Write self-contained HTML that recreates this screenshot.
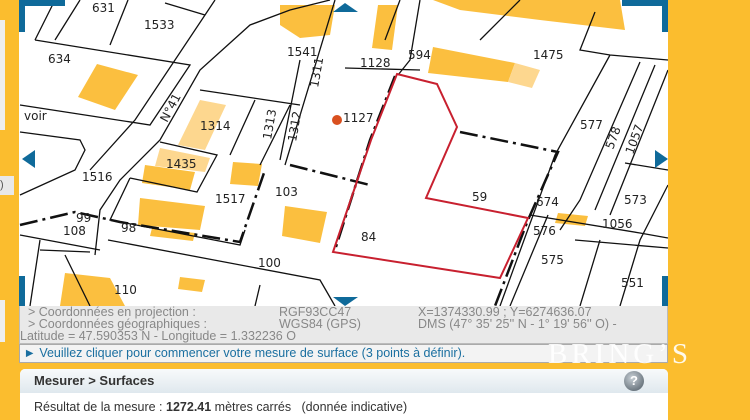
<!DOCTYPE html>
<html><head><meta charset="utf-8"><style>
body{margin:0;width:750px;height:420px;overflow:hidden;background:#fbbd2e;font-family:"Liberation Sans",sans-serif;position:relative}
.abs{position:absolute}
#map{left:19px;top:0;width:649px;height:306px;background:#fff}
#coords{left:19px;top:306px;width:647px;height:37px;background:#e9e9e9;border:1px solid #bbb;border-top:none;font-size:12.5px;color:#888;line-height:12.5px}
#msg{left:19px;top:344px;width:647px;height:17px;background:#f3f3f3;border:1px solid #aaa;font-size:12.5px;color:#1a6fa0;line-height:17px}
#meas{left:20px;top:369px;width:648px;height:51px;background:#fff;border-radius:5px 5px 0 0}
#mh{height:24px;border-radius:5px 5px 0 0;background:linear-gradient(#f8fafb,#dfe8ee);font-weight:bold;font-size:13px;color:#333;line-height:24px;padding-left:14px}
</style></head><body>
<div class="abs" style="left:0;top:20px;width:5px;height:110px;background:#eee"></div>
<div class="abs" style="left:0;top:176px;width:14px;height:19px;background:#e8e8e8;font-size:11px;color:#555;line-height:19px">)</div>
<div class="abs" style="left:0;top:300px;width:5px;height:42px;background:#eee"></div>
<div class="abs" id="map">
<svg width="649" height="306" viewBox="19 0 649 306" xmlns="http://www.w3.org/2000/svg" font-family="DejaVu Sans, sans-serif" font-size="12" fill="#222">
<g fill="#fbbf3f">
<polygon points="97,64 138,75 115,110 78,97"/>
<polygon points="280,5 335,5 330,35 300,38 280,25"/>
<polygon points="378,5 398,5 392,50 372,48"/>
<polygon points="433,0 620,0 625,30 540,20 460,10"/>
<polygon points="433,47 515,63 508,82 428,73"/>
<polygon points="145,165 195,172 190,190 142,183"/>
<polygon points="233,162 262,164 258,186 230,184"/>
<polygon points="140,198 205,206 200,230 138,225"/>
<polygon points="152,228 195,233 193,241 150,236"/>
<polygon points="285,206 327,212 320,243 282,236"/>
<polygon points="65,273 110,278 125,306 60,306"/>
<polygon points="180,277 205,280 202,292 178,289"/>
<polygon points="558,213 588,216 585,226 555,223"/>
</g>
<g fill="#fdd78f">
<polygon points="200,100 226,105 205,150 178,145"/>
<polygon points="160,148 210,158 205,172 155,166"/>
<polygon points="515,63 540,70 532,88 508,82"/>
</g>
<g stroke="#111" stroke-width="1.3" fill="none">
<path d="M55,0 L35,40 M80,0 L55,40 M128,0 L110,45 M165,3 L205,15 M35,40 L190,65 L150,125 L20,105 M215,0 L135,120 L90,170"/>
<path d="M20,132 L80,140 L85,150 L75,170 L20,195"/>
<path d="M330,0 L290,10 L250,25 L200,70 L160,140 L120,180 L100,210 L95,255"/>
<path d="M200,90 L300,105 M255,100 L230,155 M290,105 L260,165 M300,60 L280,160 M335,0 L285,165"/>
<path d="M160,142 L217,155 L197,192 L130,178"/>
<path d="M130,178 L110,220 L240,245 L245,230"/>
<path d="M108,240 L320,280 L335,306 M20,235 L100,250 M40,250 L90,252 M65,255 L90,306 M40,240 L30,306 M260,285 L255,306"/>
<path d="M400,0 L385,40 M420,0 L415,30 L410,60 L398,75 M520,0 L480,40"/>
<path d="M345,68 L420,70 M595,12 L580,50 L610,55 L668,60"/>
<path d="M610,55 L555,155 L500,306 M640,62 L580,200 L560,230 M655,65 L595,210 M668,70 L610,215"/>
<path d="M625,163 L668,170 M668,185 L640,240 L620,306 M530,215 L640,233 L668,238 M575,240 L668,248 M600,240 L580,306"/>
<path d="M548,215 L510,306"/>
</g>
<g stroke="#111" stroke-width="2.5" fill="none" stroke-dasharray="18,5,3,5">
<path d="M395,76 L370,140 L335,250"/>
<path d="M290,165 L370,185"/>
<path d="M460,132 L558,152 L528,220 L495,306"/>
<path d="M20,225 L75,212 L120,222 L240,242 L265,170"/>
</g>
<polygon points="397,74 437,84 457,127 426,198 528,218 500,278 333,252 371,140" fill="none" stroke="#c8202f" stroke-width="2"/>
<circle cx="337" cy="120" r="5" fill="#d9501f"/>
<g>
<text x="92" y="12">631</text><text x="144" y="29">1533</text><text x="48" y="63">634</text><text x="287" y="56">1541</text>
<text x="360" y="67">1128</text><text x="408" y="59">594</text><text x="533" y="59">1475</text><text x="24" y="120">voir</text>
<text x="200" y="130">1314</text><text x="343" y="122">1127</text><text x="580" y="129">577</text><text x="166" y="168">1435</text>
<text x="82" y="181">1516</text><text x="275" y="196">103</text><text x="215" y="203">1517</text><text x="472" y="201">59</text>
<text x="536" y="206">674</text><text x="624" y="204">573</text><text x="602" y="228">1056</text><text x="533" y="235">576</text>
<text x="76" y="222">99</text><text x="63" y="235">108</text><text x="121" y="232">98</text><text x="361" y="241">84</text>
<text x="258" y="267">100</text><text x="541" y="264">575</text><text x="114" y="294">110</text><text x="621" y="287">551</text>
<text transform="translate(167,123) rotate(-62)">N°41</text>
<text transform="translate(318,88) rotate(-80)">1311</text>
<text transform="translate(271,140) rotate(-80)">1313</text>
<text transform="translate(296,142) rotate(-80)">1312</text>
<text transform="translate(613,150) rotate(-70)">578</text>
<text transform="translate(633,155) rotate(-70)">1057</text>
</g>
<g fill="#0f6a9a">
<rect x="19" y="0" width="46" height="6"/><rect x="19" y="0" width="6" height="32"/>
<rect x="622" y="0" width="46" height="6"/><rect x="662" y="0" width="6" height="32"/>
<rect x="19" y="276" width="6" height="30"/><rect x="662" y="276" width="6" height="30"/>
<polygon points="333,12 358,12 345,3"/><polygon points="333,297 358,297 345,306"/>
<polygon points="35,150 35,168 22,159"/><polygon points="655,150 655,168 668,159"/>
</g>
</svg></div>
<div class="abs" id="coords">
<div class="abs" style="left:8px;top:0px">&gt; Coordonnées en projection :</div>
<div class="abs" style="left:259px;top:0px">RGF93CC47</div>
<div class="abs" style="left:398px;top:0px">X=1374330.99 ; Y=6274636.07</div>
<div class="abs" style="left:8px;top:12px">&gt; Coordonnées géographiques :</div>
<div class="abs" style="left:259px;top:12px">WGS84 (GPS)</div>
<div class="abs" style="left:398px;top:12px">DMS (47° 35' 25'' N - 1° 19' 56'' O) -</div>
<div class="abs" style="left:0;top:24px">Latitude = 47.590353 N - Longitude = 1.332236 O</div>
</div>
<div class="abs" id="msg">&nbsp;► Veuillez cliquer pour commencer votre mesure de surface (3 points à définir).</div>
<div class="abs" style="left:548px;top:338px;font-family:'Liberation Serif',serif;font-size:29px;color:rgba(255,255,255,0.9);letter-spacing:4px;white-space:nowrap">BRING’S</div>
<div class="abs" id="meas"><div id="mh">Mesurer &gt; Surfaces</div>
<div style="font-size:12.5px;color:#333;padding:7px 0 0 14px">Résultat de la mesure : <b>1272.41</b> mètres carrés &nbsp;&nbsp;(donnée indicative)</div>
<div class="abs" style="left:604px;top:2px;width:20px;height:20px;border-radius:50%;background:radial-gradient(circle at 40% 35%,#c8d0d6,#4a5660);color:#fff;font-weight:bold;font-size:13px;text-align:center;line-height:20px">?</div>
</div>
</body></html>
